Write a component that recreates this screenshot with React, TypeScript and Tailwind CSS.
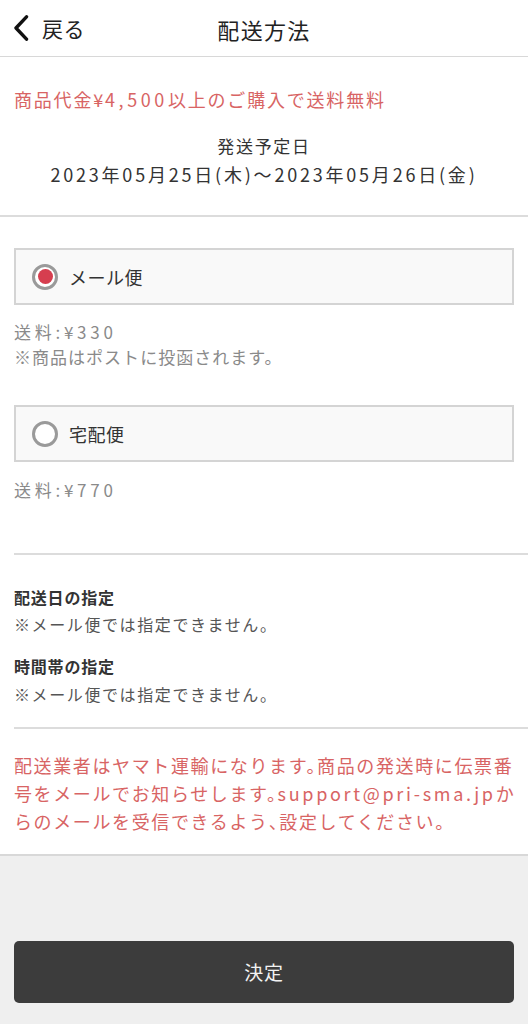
import React from "react";

const font = { fontFamily: '"Noto Sans CJK JP", "Noto Sans", sans-serif' };

function Radio({ checked }: { checked: boolean }) {
  return (
    <span className="flex h-[26px] w-[26px] shrink-0 items-center justify-center rounded-full border-[3px] border-[#9a9a9a] bg-white">
      {checked && <span className="h-[15px] w-[15px] rounded-full bg-[#d63e4f]" />}
    </span>
  );
}

function Option({ label, checked }: { label: string; checked: boolean }) {
  return (
    <div className="flex h-[57px] items-center gap-[11px] border-2 border-[#d4d4d4] bg-[#f9f9f9] pl-[16px]">
      <Radio checked={checked} />
      <span className="text-[18px] leading-[26px] tracking-[0.03em] text-[#333]">{label}</span>
    </div>
  );
}

export default function App() {
  return (
    <div className="min-h-[1024px] w-[528px] bg-[#efefef]" style={font}>
      <div className="bg-white">
        {/* Header */}
        <div className="relative flex h-[57px] items-center border-b border-[#d8d8d8]">
          <div className="flex items-center pl-[12px]">
            <svg width="18" height="26" viewBox="0 0 18 26" className="mr-[12px]">
              <path d="M14.5 1.8 L4 13 L14.5 24.2" fill="none" stroke="#111" strokeWidth="3.4" strokeLinecap="round" strokeLinejoin="round" />
            </svg>
            <span className="text-[21px] leading-[28px] tracking-[0.02em] text-[#222]">戻る</span>
          </div>
          <div className="pointer-events-none absolute left-0 right-0 top-0 flex h-[57px] items-center justify-center">
            <span className="text-[22px] leading-[28px] tracking-[0.06em] text-[#222]">配送方法</span>
          </div>
        </div>

        {/* Section 1 */}
        <div className="px-[14px] pt-[29px] pb-[27px]">
          <p className="text-[18px] leading-[26px] tracking-[0.1em] text-[#d86464]">
            商品代金¥<span className="tracking-[0.2em]">4,500</span>以上のご購入で送料無料
          </p>
          <p className="mt-[20px] text-center text-[17px] leading-[28px] tracking-[0.1em] text-[#333]">発送予定日</p>
          <p className="text-center text-[18px] leading-[28px] tracking-[0.155em] text-[#333]">
            2023年05月25日(木)〜2023年05月26日(金)
          </p>
        </div>
        <div className="h-[2px] bg-[#dcdcdc]" />

        {/* Section 2 */}
        <div className="px-[14px] pt-[31px] pb-[51px]">
          <Option label="メール便" checked />
          <p className="mt-[14px] text-[17px] leading-[25px] tracking-[0.22em] text-[#8a8a8a]">送料:¥330</p>
          <p className="text-[17px] leading-[25px] tracking-[0.06em] text-[#8a8a8a]">※商品はポストに投函されます。</p>
          <div className="mt-[36px]">
            <Option label="宅配便" checked={false} />
          </div>
          <p className="mt-[15px] text-[17px] leading-[25px] tracking-[0.22em] text-[#8a8a8a]">送料:¥770</p>
        </div>
        <div className="ml-[14px] h-[2px] bg-[#dcdcdc]" />

        {/* Section 3 */}
        <div className="px-[14px] pt-[30px] pb-[20px]">
          <p className="text-[16px] font-bold leading-[25px] tracking-[0.05em] text-[#333]">配送日の指定</p>
          <p className="mt-[2px] text-[16px] leading-[25px] tracking-[0.1em] text-[#555]">※メール便では指定できません。</p>
          <p className="mt-[17px] text-[16px] font-bold leading-[25px] tracking-[0.05em] text-[#333]">時間帯の指定</p>
          <p className="mt-[3px] text-[16px] leading-[25px] tracking-[0.1em] text-[#555]">※メール便では指定できません。</p>
        </div>
        <div className="ml-[14px] h-[2px] bg-[#dcdcdc]" />

        {/* Notice */}
        <div className="pl-[14px] pr-[10px] pt-[22px] pb-[19px]">
          <p className="text-[18px] leading-[28px] tracking-[0.09em] text-[#d86464] [font-feature-settings:'halt']">
            配送業者はヤマト運輸になります。商品の発送時に伝票番号をメールでお知らせします。<span className="tracking-[0.15em]">support@pri-sma.jp</span>からのメールを受信できるよう、設定してください。
          </p>
        </div>
      </div>
      <div className="h-[2px] bg-[#d8d8d8]" />

      {/* Footer */}
      <div className="px-[14px] pt-[85px] pb-[19px]">
        <button className="flex h-[62px] w-full items-center justify-center rounded-[5px] bg-[#3c3c3c] text-[19px] tracking-[0.04em] text-[#f2f2f2]">
          決定
        </button>
      </div>
    </div>
  );
}
